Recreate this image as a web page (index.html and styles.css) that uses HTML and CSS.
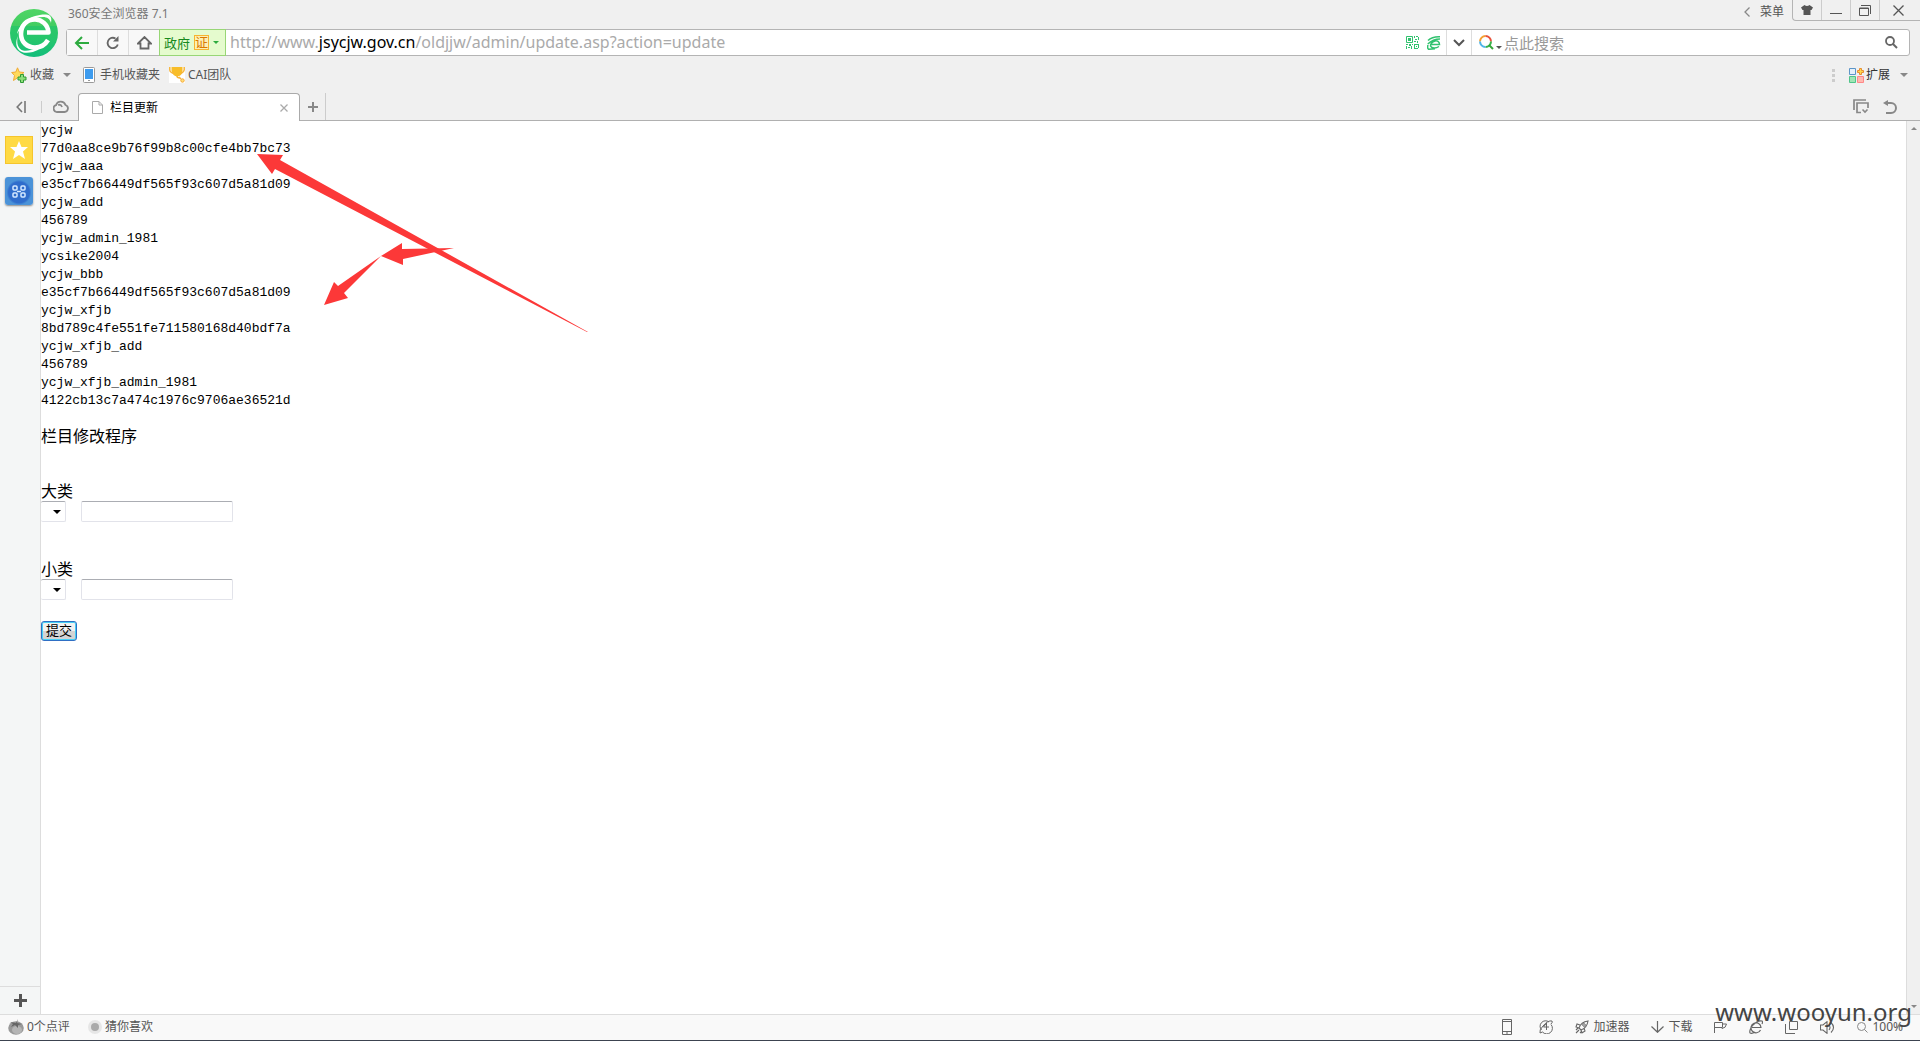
FILE: index.html
```html
<!DOCTYPE html>
<html lang="zh-CN">
<head>
<meta charset="utf-8">
<title>栏目更新</title>
<link rel="stylesheet" href="styles.css">
</head>
<body>
<header class="chrome">
  <div class="top">
    <svg class="logo" viewBox="0 0 48 48" aria-hidden="true">
      <defs><linearGradient id="lg" x1="0" y1="0" x2="0" y2="1"><stop offset="0" stop-color="#4fd565"/><stop offset=".35" stop-color="#42cd62"/><stop offset=".36" stop-color="#2cc768"/><stop offset=".65" stop-color="#25c66d"/><stop offset="1" stop-color="#12bd7c"/></linearGradient></defs>
      <circle cx="24" cy="24" r="24" fill="url(#lg)"/>
      <path d="M17 23.500H38.500C38 16 32 10.500 25 10.500C16 10.500 11 17 11 25C11 33 17 38.500 25 38.500C31 38.500 35 36 38 31" fill="none" stroke="#fff" stroke-width="4.600" stroke-linejoin="round"/>
      <path d="M7 25C9 14 22 5 36 5.500C41 6 42 9 41 14C40 10 37 8 33 8C23 8 12 15 7 25Z" fill="#fff"/>
      <path d="M8 27C6 34 8 40 13 41.500C17 42.500 22 41 26 39L29 40.500C23 43.500 15 45.500 10 42C6 39 5 33 8 27Z" fill="#fff"/>
    </svg>
    <div class="top-rows">
      <div class="titlebar">
        <span class="app-name">360安全浏览器 7.1</span>
        <button class="menu-button"><svg width="6" height="10" viewBox="0 0 6 10"><path d="M5.500 .5L1 5L5.500 9.500" fill="none" stroke="#888" stroke-width="1.300"/></svg>菜单</button>
        <div class="window-buttons">
          <button aria-label="皮肤"><svg width="12" height="10" viewBox="0 0 12 10"><path d="M3.500 0Q6 2 8.500 0L12 2.500L10.500 5H9.500V10H2.500V5H1.500L0 2.500Z" fill="#555"/></svg></button>
          <button aria-label="最小化"><svg width="12" height="10" viewBox="0 0 12 10"><path d="M0 8.500H12" stroke="#555"/></svg></button>
          <button aria-label="还原"><svg width="12" height="11" viewBox="0 0 12 11"><path d="M2 .5H11.500V9M.5 3H9.500V10.500H.5ZM.5 3.500H9.500" fill="none" stroke="#555"/></svg></button>
          <button aria-label="关闭"><svg width="11" height="11" viewBox="0 0 11 11"><path d="M.5 .5L10.500 10.500M10.500 .5L.5 10.500" stroke="#555" stroke-width="1.300"/></svg></button>
        </div>
      </div>
      <div class="toolbar">
        <button class="nav" aria-label="后退"><svg width="16" height="14" viewBox="0 0 16 14"><path d="M15 7H2M8 1L2 7L8 13" fill="none" stroke="#2dab3f" stroke-width="2"/></svg></button>
        <button class="nav" aria-label="刷新"><svg width="14" height="14" viewBox="0 0 14 14"><path d="M11.800 8.500A5.200 5.200 0 1 1 9.500 2.500" fill="none" stroke="#666" stroke-width="1.800"/><path d="M12.500 0V5.500H7Z" fill="#666"/></svg></button>
        <button class="nav" aria-label="主页"><svg width="15" height="14" viewBox="0 0 15 14"><path d="M1 7.500L7.500 1L14 7.500H11.500V12.500H3.500V7.500Z" fill="none" stroke="#666" stroke-width="1.800"/></svg></button>
        <button class="site-id"><span>政府</span><span class="cert">证</span><i class="caret green"></i></button>
        <div class="url" role="textbox" aria-label="地址">http://www.<span class="domain">jsycjw.gov.cn</span>/oldjjw/admin/update.asp?action=update</div>
        <button class="plain qr" aria-label="二维码"><svg width="13" height="13" viewBox="0 0 13 13"><path d="M.5 .5H6.500V6.500H.5Z" fill="none" stroke="#31c26f"/><path d="M2 2h3v3h-3zM8 0h1v2h-1zM10 0h2v1h-2zM12 1h1v3h-1zM9 3h2v1h-2zM8 5h2v1h-2zM11 5h1v2h-1zM0 8h2v1H0zM3 8h2v2H3zM0 10h1v3H0zM2 11h2v1H2zM5 10h1v3H5zM6 8h1v1H6zM8 8h4v1H8zM12 8h1v4h-1zM8 9h1v4H8zM9 12h3v1H9zM10 10h1v1h-1z" fill="#31c26f"/></svg></button>
        <button class="plain" aria-label="极速模式"><svg width="14" height="14" viewBox="0 0 14 14"><path d="M1 4.500Q5 .5 13 .8M.8 8Q6 3 13 3M4 8.500H12.500C12.500 5.500 10 4.500 8 5C5 6 3.500 8 3.500 10C4.500 12.500 9 12.500 12 10.500M1 9Q0 12 1.500 13.300Q5 13 8 12.800" fill="none" stroke="#31c26f" stroke-width="1.500"/></svg></button>
        <button class="drop" aria-label="地址历史"><svg width="12" height="8" viewBox="0 0 12 8"><path d="M1 1L6 6L11 1" fill="none" stroke="#555" stroke-width="2"/></svg></button>
        <div class="search">
          <svg width="15" height="15" viewBox="0 0 15 15"><g fill="none" stroke-width="2"><path d="M1 6.500A5.500 5.500 0 0 1 6.500 1" stroke="#f5a030"/><path d="M6.500 1A5.500 5.500 0 0 1 12 6.500" stroke="#e8503a"/><path d="M12 6.500A5.500 5.500 0 0 1 6.500 12" stroke="#35b24a"/><path d="M6.500 12A5.500 5.500 0 0 1 1 6.500" stroke="#4fb5e8"/><path d="M10 10L14 14" stroke="#35a53a"/></g></svg>
          <i class="caret low"></i>
          <input type="text" aria-label="搜索" placeholder="点此搜索">
          <button class="plain" aria-label="开始搜索"><svg width="13" height="13" viewBox="0 0 13 13"><circle cx="5" cy="5" r="4" fill="none" stroke="#666" stroke-width="1.800"/><path d="M8 8L12 12" stroke="#666" stroke-width="2"/></svg></button>
        </div>
      </div>
    </div>
  </div>
  <nav class="bookmarks">
    <button class="fav"><svg width="17" height="16" viewBox="0 0 17 16"><path d="M6.500 .8L8.300 5L13 5.500L9.500 8.500L10.500 13L6.500 10.800L2.500 13.500L3.500 8.500L.7 5.500L4.800 5Z" fill="#ffda5c" stroke="#f0aa35"/><path d="M9.500 7.500h3v2.500h2.500v3h-2.500v2.500h-3v-2.500h-2.500v-3h2.500z" fill="#8dde7b" stroke="#2f9a35"/></svg>收藏<i class="caret"></i></button>
    <a href="#" class="phone-link"><svg width="12" height="16" viewBox="0 0 12 16"><rect x=".5" y=".5" width="11" height="15" rx="1" fill="#fff" stroke="#999"/><path d="M2 2H10V12H2Z" fill="#3d9bee"/><path d="M5 13.500H7" stroke="#999"/></svg>手机收藏夹</a>
    <a href="#" class="team-link"><svg width="16" height="16" viewBox="0 0 16 16"><path d="M0 0H16V16H0Z" fill="#fff"/><path d="M2.500 0H13.500V4Q13 9 8 9.500Q4 9 2.500 4Z" fill="#f8bd29"/><path d="M.8 0V3Q1 5.500 5 6.500M15.200 0V3Q15 5 12 6.500M8 9Q8 11 11 11M10 10L12 12" fill="none" stroke="#f7b43a" stroke-width="1.500"/><circle cx="13.500" cy="13.500" r="1.700" fill="#ffe07a" stroke="#f5a83a"/></svg>CAI团队</a>
    <button class="extensions"><svg class="grip" width="3" height="13" viewBox="0 0 3 13"><path d="M0 0H3V3H0ZM0 5H3V8H0ZM0 10H3V13H0Z" fill="#ccc"/></svg><svg width="15" height="15" viewBox="0 0 15 15"><path d="M.5 .5H6.500V6.500H.5Z" fill="#e5f0fa" stroke="#5c95c8"/><path d="M.5 8.500H6.500V14.500H.5Z" fill="#a0e5b5" stroke="#4fc58a"/><path d="M8.500 8.500H14.500V14.500H8.500Z" fill="#ffb9b0" stroke="#f88"/><path d="M10.500 .5h2v2h2v2h-2v2h-2v-2h-2v-2h2z" fill="#ffd84c" stroke="#e88c30"/></svg>扩展<i class="caret"></i></button>
  </nav>
  <div class="tabs">
    <button class="collapse" aria-label="收起侧栏"><svg width="10" height="12" viewBox="0 0 10 12"><path d="M6 1L1.200 6L6 11M9 0V12" fill="none" stroke="#777" stroke-width="1.600"/></svg><i class="rule"></i></button>
    <button class="cloud" aria-label="云标签"><svg width="16" height="13" viewBox="0 0 16 13"><path d="M4.500 12A3.500 3.500 0 0 1 3 5.200A5 5 0 0 1 12.500 5A3.600 3.600 0 0 1 11.500 12ZM5 5Q8 4 9 7" fill="none" stroke="#888" stroke-width="1.800"/></svg></button>
    <div class="tab">
      <svg width="11" height="13" viewBox="0 0 11 13"><path d="M.5 .5H7L10.500 4V12.500H.5ZM7 .5V4H10.500" fill="none" stroke="#aaa"/></svg>
      <span class="tab-title">栏目更新</span>
      <button class="plain" aria-label="关闭标签"><svg width="8" height="8" viewBox="0 0 8 8"><path d="M.5 .5L7.500 7.500M7.500 .5L.5 7.500" stroke="#aaa" stroke-width="1.300"/></svg></button>
    </div>
    <button class="new-tab" aria-label="新标签"><svg width="10" height="10" viewBox="0 0 10 10"><path d="M5 0V10M0 5H10" stroke="#888" stroke-width="2"/></svg></button>
    <div class="tab-tools">
      <button class="plain" aria-label="标签列表"><svg width="16" height="15" viewBox="0 0 16 15"><path d="M1 11V1H13M8 13.500H4V4H15V9" fill="none" stroke="#888" stroke-width="1.700"/><path d="M9.500 10.500L12 13L14.500 10.500" fill="none" stroke="#888" stroke-width="1.600"/></svg></button>
      <button class="plain" aria-label="恢复标签"><svg width="14" height="14" viewBox="0 0 14 14"><path d="M4 3H8A5 5 0 0 1 8 13H3" fill="none" stroke="#888" stroke-width="2"/><path d="M0 3L5 0V6Z" fill="#888"/></svg></button>
    </div>
  </div>
</header>

<div class="workspace">
  <aside class="sidebar">
    <button class="side-star" aria-label="收藏夹"><svg width="18" height="18" viewBox="0 0 18 18"><path d="M9 0L11.500 6H18L13 10.500L15 18L9 14L3 18L5 10.500L0 6H6.500Z" fill="#fff"/></svg></button>
    <button class="side-apps" aria-label="应用"><svg width="14" height="13" viewBox="0 0 14 13"><g fill="none" stroke="#d5e9ff" stroke-width="1.500"><rect x="1" y="1" width="4" height="4" rx="1"/><rect x="9" y="1" width="4" height="4" rx="1"/><rect x="1" y="8" width="4" height="4" rx="1"/><rect x="9" y="8" width="4" height="4" rx="1"/><path d="M5 6.500H9"/></g></svg></button>
    <button class="side-add" aria-label="添加"><svg width="13" height="13" viewBox="0 0 13 13"><path d="M6.500 0V13M0 6.500H13" stroke="#555" stroke-width="3"/></svg></button>
  </aside>
  <main class="page">
    <div class="document">
      <div class="dump">ycjw<br>77d0aa8ce9b76f99b8c00cfe4bb7bc73<br>ycjw_aaa<br>e35cf7b66449df565f93c607d5a81d09<br>ycjw_add<br>456789<br>ycjw_admin_1981<br>ycsike2004<br>ycjw_bbb<br>e35cf7b66449df565f93c607d5a81d09<br>ycjw_xfjb<br>8bd789c4fe551fe711580168d40bdf7a<br>ycjw_xfjb_add<br>456789<br>ycjw_xfjb_admin_1981<br>4122cb13c7a474c1976c9706ae36521d</div>
      <form class="form">
        <p class="heading">栏目修改程序</p>
        <div class="field">
          <label for="major">大类</label>
          <div class="controls"><span class="select"><select id="major-list" aria-label="大类列表"></select></span><input id="major" type="text"></div>
        </div>
        <div class="field">
          <label for="minor">小类</label>
          <div class="controls"><span class="select"><select id="minor-list" aria-label="小类列表"></select></span><input id="minor" type="text"></div>
        </div>
        <button type="button" class="submit">提交</button>
      </form>
    </div>
    <svg class="arrows" width="334" height="182" viewBox="257 154 334 182" aria-hidden="true"><g fill="#fc3838"><path d="M257 154L283 155L280 160L588 332L587 332L275 169L272 174Z"/><path d="M381 256L402 243V249L454 248L403 259V265Z"/><path d="M324 305L334 282L338 286L381 256L344 293L348 298Z"/></g></svg>
  </main>
  <div class="scrollbar"><i class="up"></i><i class="down"></i></div>
</div>

<footer class="status">
  <button class="tomato"><svg width="16" height="16" viewBox="0 0 16 16"><ellipse cx="8" cy="9" rx="7.800" ry="6.800" fill="#999"/><ellipse cx="9" cy="11" rx="5" ry="4" fill="#b5b5b5"/><path d="M8 4L2 3L5 5L3 8L7 6L10 9V6L14 5L9 4L10 0Z" fill="#666"/></svg>0个点评</button>
  <button class="guess"><svg width="14" height="14" viewBox="0 0 14 14"><circle cx="7" cy="7" r="7" fill="#e6e6e6"/><circle cx="7" cy="7" r="4" fill="#aaa"/></svg>猜你喜欢</button>
  <div class="status-tools">
    <button class="s-phone" aria-label="手机"><svg width="10" height="16" viewBox="0 0 10 16"><path d="M.5 .5H9.500V15.500H.5ZM.5 2.500H9.500M.5 12.500H9.500M4 14H6" fill="none" stroke="#666"/></svg></button>
    <button class="s-boost" aria-label="加速"><svg width="14" height="14" viewBox="0 0 14 14"><path d="M1 13Q0 10 4 6Q9 0 13 1Q14 2 12 4M2.500 10A5.500 5.500 0 0 1 10 2M12 4.500A5.500 5.500 0 0 1 3.500 12M1 13L3.500 12M7.500 3L4.500 7H10M7.500 3V10" fill="none" stroke="#666"/></svg></button>
    <button class="s-rocket"><svg width="14" height="14" viewBox="0 0 14 14"><path d="M4 8Q6 2 13 1Q12 8 6 10ZM5 5L2 4L1 7L4 8M9 8L10 11L7 13L6 10M4 10L1 13M7 11L5 13M3 8L1 10" fill="none" stroke="#666" stroke-width="1.100"/><circle cx="9" cy="5" r="1.300" fill="none" stroke="#666"/></svg>加速器</button>
    <button class="s-download"><svg width="13" height="12" viewBox="0 0 13 12"><path d="M6.500 0V11M.5 5.500L6.500 11.300L12.500 5.500" fill="none" stroke="#666" stroke-width="1.200"/></svg>下载</button>
    <button class="s-flag" aria-label="举报"><svg width="13" height="12" viewBox="0 0 13 12"><path d="M.5 12V1.500H8.500V3H12.500Q12 7 8 7.500V6.500H.5M8.500 3V6.500" fill="none" stroke="#666"/></svg></button>
    <button class="s-core" aria-label="内核"><svg width="14" height="14" viewBox="0 0 14 14"><path d="M3 7.500H12A5 5 0 1 0 11.500 10M1 13Q0 10 4 5Q9 0 13 1Q14 2 13 4M1 13Q3 14 6 12" fill="none" stroke="#666" stroke-width="1.200"/></svg></button>
    <button class="s-split" aria-label="分屏"><svg width="13" height="13" viewBox="0 0 13 13"><path d="M4.500 .5H12.500V8.500H4.500ZM.5 3V12.500H10" fill="none" stroke="#666"/></svg></button>
    <button class="s-sound" aria-label="声音"><svg width="15" height="13" viewBox="0 0 15 13"><path d="M.5 4H3L7 .7V12.300L3 9H.5ZM9 4Q11 6.500 9 9M11 1.500Q16 6.500 11 11.500" fill="none" stroke="#666" stroke-width="1.100"/></svg></button>
    <button class="s-zoom"><svg width="11" height="11" viewBox="0 0 11 11"><circle cx="4.500" cy="4.500" r="4" fill="none" stroke="#888"/><path d="M7.500 7.500L10.500 10.500" stroke="#888"/></svg>100%</button>
  </div>
  <span class="watermark">www.wooyun.org</span>
</footer>
</body>
</html>
```

FILE: styles.css
```css
* { box-sizing: border-box; }
body {
  margin: 0;
  min-height: 100vh;
  display: flex;
  flex-direction: column;
  background: #fff;
  color: #555;
  font: 12px/16px "Noto Sans", "Noto Sans CJK SC", sans-serif;
}
svg { display: block; flex: none; }
button {
  display: flex;
  align-items: center;
  margin: 0;
  padding: 0;
  border: 0;
  background: none;
  color: inherit;
  font: inherit;
  white-space: nowrap;
}
a { color: inherit; text-decoration: none; }

.caret {
  flex: none;
  border: 4px solid transparent;
  border-top-color: #888;
  border-bottom: 0;
}
.caret.green { border-width: 3px 3px 0; border-top-color: #2dab3f; }
.caret.low { border-width: 3px 3px 0; border-top-color: #555; margin: 10px 2px 0 2px; }

/* Browser frame */
.chrome { background: #f0f0f0; }
.top { display: flex; padding: 0 10px; }
.logo { width: 48px; height: 48px; margin: 9px 8px 0 0; }
.top-rows { flex: 1; min-width: 0; }
.titlebar { display: flex; height: 29px; }
.app-name { margin: 6px auto 0 2px; color: #777; }
.menu-button { gap: 10px; height: 24px; }
.window-buttons {
  display: flex;
  height: 21px;
  margin: 0 -10px 0 8px;
  border: 1px solid #b4b4b4;
  border-width: 0 0 1px 1px;
  border-radius: 0 0 0 4px;
}
.window-buttons button { width: 29px; justify-content: center; border-right: 1px solid #ccc; }
.window-buttons button:last-child { width: 40px; padding-right: 3px; border: 0; }

.toolbar {
  display: flex;
  height: 27px;
  border: 1px solid #b4b4b4;
  border-radius: 3px;
  background: #fff;
}
.nav { width: 31px; justify-content: center; background: #f8f8f8; border-right: 1px solid #ddd; }
.site-id {
  width: 67px;
  gap: 4px;
  margin: -1px 0 -1px -1px;
  padding-left: 4px;
  border: 1px solid #98d676;
  background: #e5fbce;
  color: #178a1e;
  font-size: 13px;
}
.cert { border: 1px solid #f7b430; background: #fdf0b4; color: #d97a00; line-height: 13px; }
.url { flex: 1; padding-left: 4px; color: #aaa; font-size: 16px; line-height: 24px; white-space: nowrap; overflow: hidden; }
.domain { color: #000; }
.plain { padding: 0; }
.qr { margin-right: 8px; }
.drop { width: 26px; margin-left: 5px; justify-content: center; border: 1px solid #ddd; border-width: 0 1px; }
.search { display: flex; align-items: center; width: 437px; padding: 0 11px 0 7px; }
.search input { flex: 1; min-width: 0; padding: 0; border: 0; outline: 0; background: none; font: inherit; font-size: 15px; }
.search input::placeholder { color: #999; }

.bookmarks { display: flex; align-items: center; height: 36px; padding: 0 12px 0 11px; }
.fav { gap: 2px; }
.fav .caret { margin-left: 7px; }
.phone-link { display: flex; gap: 5px; margin-left: 12px; }
.team-link { display: flex; gap: 3px; margin-left: 9px; }
.extensions { gap: 2px; margin-left: auto; color: #333; }
.extensions .grip { margin-right: 12px; }
.extensions .caret { margin-left: 8px; }

.tabs { display: flex; height: 28px; border-bottom: 1px solid #b0b0b0; }
.collapse { width: 42px; padding-left: 16px; }
.rule { width: 1px; height: 12px; margin-left: auto; background: #ccc; }
.cloud { width: 36px; padding-left: 11px; }
.tab {
  display: flex;
  align-items: center;
  width: 222px;
  height: 28px;
  padding: 0 11px 0 13px;
  gap: 7px;
  border: 1px solid #aaa;
  border-bottom: 0;
  border-radius: 4px 4px 0 0;
  background: #fff;
}
.tab-title { flex: 1; color: #000; }
.new-tab { width: 26px; justify-content: center; border-right: 1px solid #ccc; }
.tab-tools { display: flex; gap: 14px; margin: 0 23px 0 auto; }

/* Middle: sidebar, page, scrollbar */
.workspace { flex: 1; display: flex; }
.sidebar {
  width: 41px;
  display: flex;
  flex-direction: column;
  padding-top: 15px;
  border-right: 1px solid #ddd;
  background: #f4f6f6;
}
.side-star, .side-apps { width: 28px; height: 28px; margin: 0 0 13px 5px; justify-content: center; }
.side-star { border: 1px solid #f5c52c; background: #ffda44; }
.side-apps { border-radius: 3px; background: radial-gradient(circle at 50% 55%, #2f6dcc 50%, #4b93d8 60%); box-shadow: 0 1px 2px #888; }
.side-add { height: 28px; margin-top: auto; padding-left: 14px; border-top: 1px solid #ddd; }

.page { position: relative; flex: 1; min-width: 0; color: #000; }
.document { padding-top: 1px; font: 16px/18px "Noto Sans CJK SC", sans-serif; }
.dump { font: 13px/18px "Liberation Mono", monospace; }
.form { display: flex; flex-direction: column; align-items: flex-start; padding-top: 16px; }
.heading { margin: 0 0 37px; }
.field { margin-bottom: 37px; }
.field label { display: block; margin-bottom: 2px; }
.controls { display: flex; gap: 15px; }
.select { position: relative; display: flex; }
.select::after {
  content: "";
  position: absolute;
  right: 5px;
  top: 9px;
  border: 4px solid transparent;
  border-top-color: #000;
  border-bottom: 0;
  pointer-events: none;
}
.select select, .controls input {
  height: 21px;
  border: 1px solid #e2e3ea;
  border-top-color: #abadb3;
  border-radius: 2px;
  background: #fff;
}
.select select { width: 25px; border-left: 0; appearance: none; }
.controls input { width: 152px; padding: 0 4px; }
.submit {
  height: 20px;
  width: 36px;
  margin-top: -16px;
  padding-bottom: 2px;
  justify-content: center;
  border: 1px solid #2f6fc4;
  border-radius: 3px;
  background: linear-gradient(#f2f2f2 50%, #d4d4d4 50%);
  box-shadow: inset 0 0 0 1px #48d0f5;
  color: #000;
  font-size: 13px;
  line-height: 16px;
}
.arrows { position: absolute; left: 216px; top: 33px; }

.scrollbar {
  display: flex;
  flex-direction: column;
  justify-content: space-between;
  align-items: center;
  width: 14px;
  padding: 6px 0;
  border-left: 1px solid #ddd;
  background: #f0f0f0;
}
.up, .down { border: 3px solid transparent; }
.up { border-top: 0; border-bottom-color: #888; }
.down { border-bottom: 0; border-top-color: #888; }

/* Status bar */
.status {
  position: relative;
  display: flex;
  align-items: center;
  height: 27px;
  padding: 0 17px 1px 8px;
  border-top: 1px solid #ddd;
  border-bottom: 1px solid #3c4350;
  background: #f9f9f9;
}
.status button { gap: 3px; }
.status .guess { margin-left: 18px; }
.status-tools { display: flex; align-items: center; margin-left: auto; }
.status-tools button { gap: 4px; margin-left: 22px; }
.status-tools .s-boost { margin-left: 27px; }
.watermark {
  position: absolute;
  right: 8px;
  bottom: 12px;
  color: #444;
  font-size: 24px;
  line-height: 32px;
}
```
